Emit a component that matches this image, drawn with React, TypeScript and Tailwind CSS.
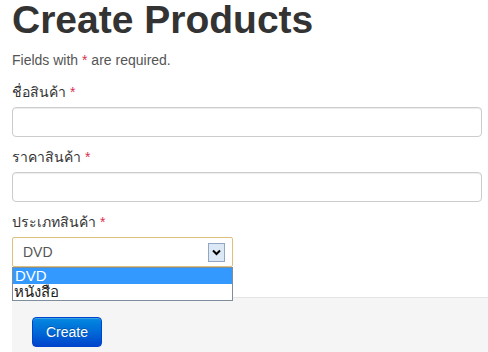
import React from "react";

export default function App() {
  return (
    <div className="w-[488px] h-[352px] overflow-hidden bg-white font-['Liberation_Sans',Arial,sans-serif] text-[#333]">
      <div className="pl-3">
        <h1 className="text-[39px] leading-[40px] font-bold text-[#333] m-0 whitespace-nowrap">Create Products</h1>
        <p className="mt-[10px] text-[14px] leading-[20px] text-[#555]">
          Fields with <span className="text-[#d9304f]">*</span> are required.
        </p>

        <label className="block mt-[12px] text-[14px] leading-[20px] text-[#333]">
          ชื่อสินค้า <span className="text-[#d9304f]">*</span>
        </label>
        <div className="mt-[5px] w-[470px] h-[30px] border border-[#cccccc] rounded-[4px] bg-white shadow-[inset_0_1px_1px_rgba(0,0,0,0.075)]" />

        <label className="block mt-[10px] text-[14px] leading-[20px] text-[#333]">
          ราคาสินค้า <span className="text-[#d9304f]">*</span>
        </label>
        <div className="mt-[5px] w-[470px] h-[30px] border border-[#cccccc] rounded-[4px] bg-white shadow-[inset_0_1px_1px_rgba(0,0,0,0.075)]" />

        <label className="block mt-[10px] text-[14px] leading-[20px] text-[#333]">
          ประเภทสินค้า <span className="text-[#d9304f]">*</span>
        </label>
        <div className="relative mt-[5px] w-[221px] z-10">
          <div className="h-[30px] border border-[#dcc07c] rounded-[2px] bg-white flex items-center pl-[10px] pr-[7px]">
            <span className="flex-1 text-[14px] text-[#555]">DVD</span>
            <span className="w-[17px] h-[19px] border border-[#93a7c4] bg-[#dde8f6] flex items-center justify-center">
              <svg width="9" height="7" viewBox="0 0 9 7">
                <path d="M1 1.5 L4.5 5 L8 1.5" fill="none" stroke="#000" strokeWidth="2" />
              </svg>
            </span>
          </div>
          <div className="absolute left-0 top-[30px] w-[221px] border border-[#7f8d9c] bg-white">
            <div className="h-[16px] bg-[#3399ff] text-white text-[15px] leading-[16px] pl-[2px]">DVD</div>
            <div className="h-[16px] text-[#222] text-[15px] leading-[16px] pl-[1px]">หนังสือ</div>
          </div>
        </div>

        <div className="mt-[30px] h-[60px] border-t border-[#e5e5e5] bg-[#f5f5f5] pt-[19px] pl-[20px]">
          <button className="h-[30px] px-[13px] text-[14px] leading-[20px] text-white rounded-[4px] border border-[#0044cc] bg-gradient-to-b from-[#0a8ae0] to-[#0044cc] shadow-[inset_0_1px_0_rgba(255,255,255,0.2)] [text-shadow:0_-1px_0_rgba(0,0,0,0.25)]">
            Create
          </button>
        </div>
      </div>
    </div>
  );
}
